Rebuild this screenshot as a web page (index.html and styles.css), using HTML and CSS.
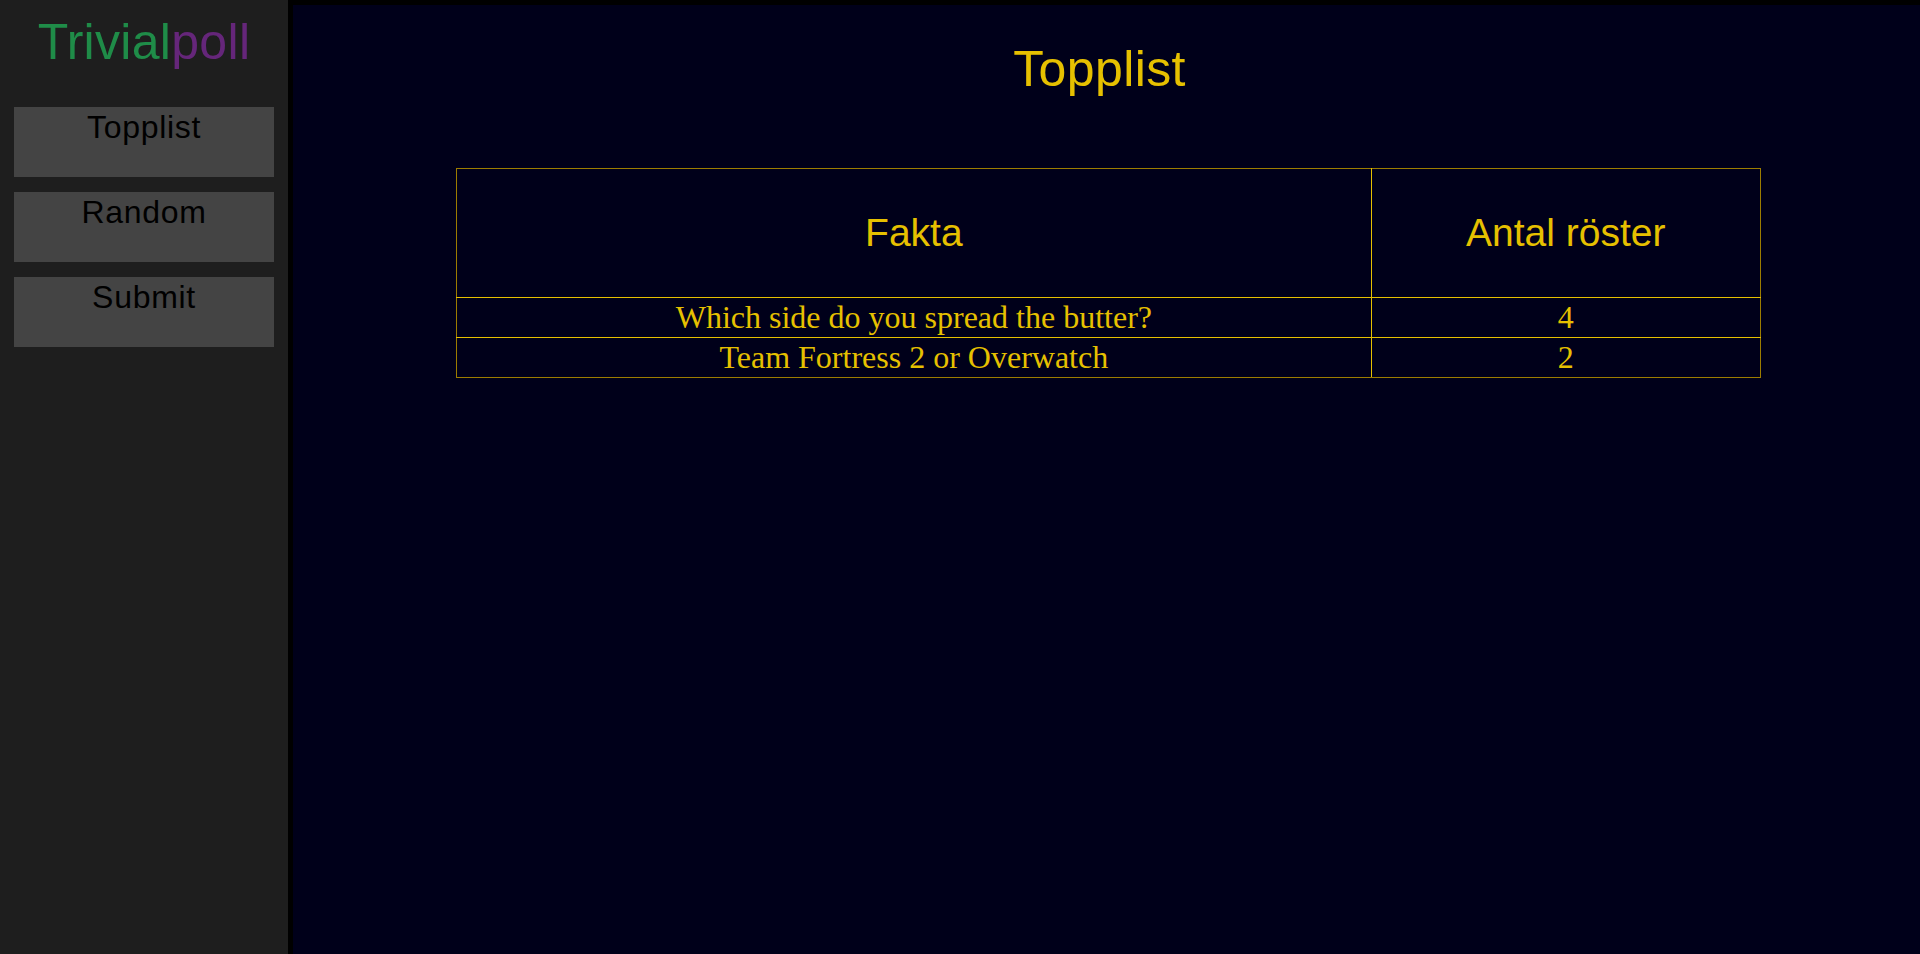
FILE: index.html
```html
<!DOCTYPE html>
<html lang="en">

<head>
  <meta charset="UTF-8">
  <meta name="viewport" content="width=device-width, initial-scale=1.0">
  <title>Trivialpoll - Topplist</title>
  <link rel="stylesheet" href="styles.css">
</head>

<body>
  <nav class="sidebar">
    <div class="logo"><span class="logo-green">Trivial</span><span class="logo-purple">poll</span></div>
    <a class="nav-button" href="#">Topplist</a>
    <a class="nav-button" href="#">Random</a>
    <a class="nav-button" href="#">Submit</a>
  </nav>

  <main class="content">
    <h1 class="page-title">Topplist</h1>
    <table class="toplist">
      <tr>
        <th class="col-fact">Fakta</th>
        <th>Antal röster</th>
      </tr>
      <tr>
        <td>Which side do you spread the butter?</td>
        <td>4</td>
      </tr>
      <tr>
        <td>Team Fortress 2 or Overwatch</td>
        <td>2</td>
      </tr>
    </table>
  </main>
</body>

</html>
```

FILE: styles.css
```css
body {
  margin: 0;
  display: flex;
  min-height: 100vh;
  background: #000;
  font-family: "Liberation Sans", Arial, sans-serif;
}

.sidebar {
  width: 288px;
  flex-shrink: 0;
  background: #1e1e1e;
  display: flex;
  flex-direction: column;
  align-items: center;
  gap: 15px;
}

.logo {
  font-size: 50px;
  letter-spacing: 0.3px;
  margin-top: 13px;
  margin-bottom: 21px;
}

.logo-green {
  color: #1f8c48;
}

.logo-purple {
  color: #65267a;
}

.nav-button {
  display: block;
  box-sizing: border-box;
  width: 260px;
  height: 70px;
  padding-top: 2px;
  background: #444444;
  color: #000;
  font-size: 32px;
  letter-spacing: 0.7px;
  text-align: center;
  text-decoration: none;
}

.content {
  flex: 1;
  background: #00001a;
  border-left: 5px solid #000;
  border-top: 5px solid #000;
}

.page-title {
  margin: 35px 0 70px;
  padding-right: 14px;
  font-size: 50px;
  letter-spacing: 0.4px;
  font-weight: normal;
  text-align: center;
  color: #e6c000;
}

.toplist {
  width: 80.2%;
  margin: 0 0 0 10%;
  border-collapse: collapse;
  border: 1px solid #9c7c00;
  color: #e6c000;
}

.toplist th,
.toplist td {
  border: 1px solid #e6c000;
  text-align: center;
}

.toplist th {
  height: 126px;
  font-size: 39px;
  font-weight: normal;
}

.toplist td {
  padding: 1px;
  font-family: "Liberation Serif", "Times New Roman", serif;
  font-size: 32px;
}

.toplist tr:first-child th {
  border-top-color: #9c7c00;
}

.toplist tr:last-child td {
  border-bottom-color: #9c7c00;
}

.toplist th:first-child,
.toplist td:first-child {
  border-left-color: #9c7c00;
}

.toplist th:last-child,
.toplist td:last-child {
  border-right-color: #9c7c00;
}

.col-fact {
  width: 70.2%;
}
```
